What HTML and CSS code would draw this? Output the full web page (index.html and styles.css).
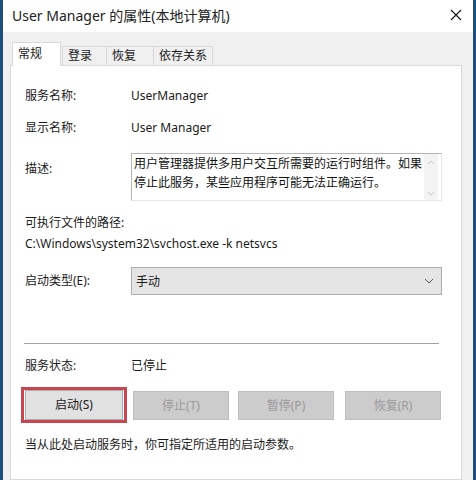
FILE: index.html
```html
<!DOCTYPE html>
<html lang="zh-CN">

<head>
    <meta charset="UTF-8">
    <title>User Manager 的属性(本地计算机)</title>
    <link rel="stylesheet" href="styles.css">
</head>

<body>
    <div class="window">
        <div class="titlebar">
            <div class="title">User Manager 的属性(本地计算机)</div>
            <div class="close">
                <svg width="12" height="12" viewBox="0 0 12 12">
                    <path d="M1 1 L11 11 M11 1 L1 11" stroke="#111" stroke-width="1.1" fill="none" />
                </svg>
            </div>
        </div>

        <div class="client">
            <div class="tabs">
                <div class="tab active">常规</div>
                <div class="tab">登录</div>
                <div class="tab">恢复</div>
                <div class="tab">依存关系</div>
            </div>

            <div class="panel">
                <div class="row row-name">
                    <div class="label">服务名称:</div>
                    <div class="value">UserManager</div>
                </div>
                <div class="row row-display">
                    <div class="label">显示名称:</div>
                    <div class="value">User Manager</div>
                </div>
                <div class="row row-desc">
                    <div class="label">描述:</div>
                    <div class="desc">
                        <div class="desc-text">用户管理器提供多用户交互所需要的运行时组件。如果<br>停止此服务，某些应用程序可能无法正确运行。</div>
                        <div class="scroll">
                            <svg width="8" height="5" viewBox="0 0 8 5">
                                <path d="M1 4 L4 1 L7 4" stroke="#c4c4c4" stroke-width="1" fill="none" />
                            </svg>
                            <svg width="8" height="5" viewBox="0 0 8 5">
                                <path d="M1 1 L4 4 L7 1" stroke="#c4c4c4" stroke-width="1" fill="none" />
                            </svg>
                        </div>
                    </div>
                </div>

                <div class="path-label">可执行文件的路径:</div>
                <div class="path">C:\Windows\system32\svchost.exe -k netsvcs</div>

                <div class="row row-start">
                    <div class="label">启动类型(E):</div>
                    <div class="select">
                        <span>手动</span>
                        <svg width="10" height="6" viewBox="0 0 10 6">
                            <path d="M1 1 L5 5 L9 1" stroke="#555" stroke-width="1" fill="none" />
                        </svg>
                    </div>
                </div>

                <div class="divider"></div>

                <div class="row row-status">
                    <div class="label">服务状态:</div>
                    <div class="value">已停止</div>
                </div>

                <div class="buttons">
                    <div class="highlight">
                        <div class="btn">启动(S)</div>
                    </div>
                    <div class="btn disabled btn-stop">停止(T)</div>
                    <div class="btn disabled btn-pause">暂停(P)</div>
                    <div class="btn disabled btn-resume">恢复(R)</div>
                </div>

                <div class="hint">当从此处启动服务时，你可指定所适用的启动参数。</div>
            </div>
        </div>
    </div>
</body>

</html>
```

FILE: styles.css
```css
* {
    margin: 0;
    padding: 0;
    box-sizing: border-box;
}

body {
    font-family: 'Noto Sans', 'Noto Sans CJK SC', sans-serif;
    font-size: 12px;
    color: #1a1a1a;
    background: #f0f0f0;
    overflow: hidden;
}

.window {
    width: 476px;
    height: 480px;
    border-left: 3px solid #1d4f7e;
    border-right: 3px solid #1d4f7e;
    background: #f0f0f0;
    display: flex;
    flex-direction: column;
}

.titlebar {
    height: 32px;
    background: #ffffff;
    display: flex;
    align-items: center;
    justify-content: space-between;
    padding: 0 11px 2px 9px;
}

.title {
    font-size: 14px;
    color: #222;
}

.close {
    display: flex;
    align-items: center;
}

.client {
    flex: 1;
    padding: 10px 11px 0 7px;
    display: flex;
    flex-direction: column;
}

.tabs {
    display: flex;
    align-items: flex-end;
    height: 23px;
    padding-left: 2px;
}

.tab {
    height: 19px;
    line-height: 17px;
    padding: 0 5px;
    border: 1px solid #d9d9d9;
    border-bottom: none;
    background: #f0f0f0;
    margin-right: -1px;
    white-space: nowrap;
}

.tab.active {
    width: 49px;
    height: 24px;
    line-height: 21px;
    background: #ffffff;
    margin-right: 1px;
    margin-bottom: -1px;
    position: relative;
    z-index: 1;
}

.tab:nth-child(2) {
    width: 45px;
}

.tab:nth-child(3) {
    width: 48px;
}

.tab:nth-child(4) {
    width: 60px;
}

.panel {
    flex: 1;
    background: #ffffff;
    border: 1px solid #d9d9d9;
    padding: 20px 19px 0 14px;
}

.row {
    display: flex;
    align-items: center;
}

.label {
    width: 106px;
    flex-shrink: 0;
    line-height: 20px;
}

.value {
    line-height: 20px;
}

.row-display {
    margin-top: 12px;
}

.row-desc {
    margin-top: 15px;
    align-items: flex-start;
}

.row-desc .label {
    margin-top: 6px;
}

.desc {
    flex: 1;
    height: 48px;
    border: 1px solid #b4b4b4;
    border-right-color: #e6e6e6;
    border-bottom-color: #e6e6e6;
    display: flex;
}

.desc-text {
    flex: 1;
    padding-left: 2px;
    line-height: 19px;
    color: #111;
    white-space: nowrap;
}

.scroll {
    width: 14px;
    background: #f3f3f3;
    display: flex;
    flex-direction: column;
    justify-content: space-between;
    align-items: center;
    padding: 6px 0 4px;
    margin-right: 3px;
}

.path-label {
    margin-top: 12px;
    line-height: 20px;
}

.path {
    margin-top: 1px;
    line-height: 20px;
}

.row-start {
    margin-top: 13px;
}

.select {
    flex: 1;
    height: 28px;
    background: #e5e5e5;
    border: 1px solid #adadad;
    display: flex;
    align-items: center;
    justify-content: space-between;
    padding: 0 7px 0 4px;
}

.divider {
    height: 1px;
    background: #a0a0a0;
    margin: 48px 3px 0 -1px;
}

.row-status {
    margin-top: 12px;
}

.buttons {
    display: flex;
    align-items: center;
    margin-top: 11px;
    margin-left: -4px;
}

.highlight {
    border: 3px solid #c8464f;
    padding: 0 1px;
    margin-right: 6px;
}

.btn {
    width: 98px;
    height: 30px;
    line-height: 28px;
    text-align: center;
    background: #e1e1e1;
    border: 1px solid #adadad;
}

.btn.disabled {
    width: 96px;
    height: 29px;
    background: #cccccc;
    border-color: #bfbfbf;
    color: #9a9a9a;
}

.btn-pause {
    margin-left: 9px;
    width: 98px;
}

.btn-resume {
    margin-left: 11px;
}

.hint {
    margin-top: 12px;
    line-height: 20px;
}
```
